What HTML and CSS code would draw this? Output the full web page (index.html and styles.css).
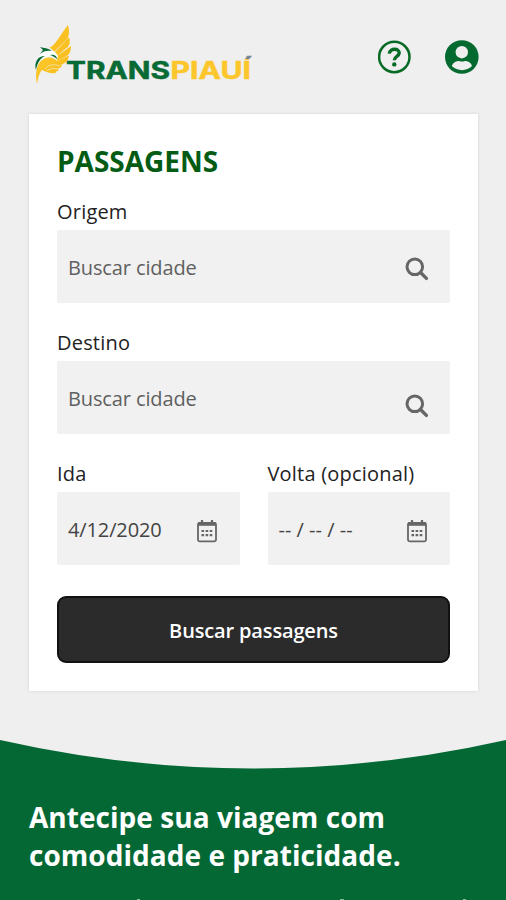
FILE: index.html
```html
<!DOCTYPE html>
<html lang="pt-BR">
<head>
    <meta charset="UTF-8">
    <meta name="viewport" content="width=device-width, initial-scale=1.0">
    <title>Transpiauí - Passagens</title>
    <link rel="stylesheet" href="styles.css">
</head>
<body>
    <header class="header">
        <svg class="logo" width="222" height="66" viewBox="32 22 222 66" role="img" aria-label="Transpiauí">
            <defs>
                <linearGradient id="wing" x1="0" y1="0" x2="1" y2="1">
                    <stop offset="0" stop-color="#fdc92e"/>
                    <stop offset="1" stop-color="#f8b918"/>
                </linearGradient>
                <linearGradient id="accent" gradientUnits="userSpaceOnUse" x1="0" y1="50" x2="0" y2="90">
                    <stop offset="0.235" stop-color="#758592"/>
                    <stop offset="0.235" stop-color="#fcc62c"/>
                </linearGradient>
            </defs>
            <!-- upper wing, one blade per feather -->
            <path fill="url(#wing)" d="M49 48C55 46 60 35 68 25C70 32 69 38 65 41L57 49L54 52C53 50 51 48 49 48Z"/>
            <path fill="url(#wing)" d="M55 52L69 37C71 43 69 47 65 49L57 56Z"/>
            <path fill="url(#wing)" d="M57 56L71 46C71 52 69 55 65 57L57 61Z"/>
            <path fill="url(#wing)" d="M57 61L69 55.5C68 61 65 64 60 65L56 63Z"/>
            <!-- lower wing and tail -->
            <path fill="url(#wing)" d="M37 84C35 74 36 65 42 60C47 56 54 57 58 62L62 66C60 69 57 68 59 70C57 72 55 71 56 73C51 74 46 72 42 70C39 73 38 78 37 84Z"/>
            <path fill="none" stroke="#f3e6bd" stroke-width="0.8" d="M45 69C49 64 54 64 60 66M47 70.5Q52 67 59 69"/>
            <!-- head -->
            <path fill="#fff" d="M37 62C38 55 44 49 52 51C56 52 58 55 58 58C50 54 42 57 37 65Z"/>
            <path fill="#086b35" d="M40 47C44 48 48 48 52 51C47 50 43 51 40 54L43 50ZM37 60C39 57 41 56 45 56C40 58 37 64 36 70C35 67 35 63 37 60ZM50 55C54 54 57 56 57 59C55 57 53 56 50 55Z"/>
            <text class="logo-text" x="66" y="79" textLength="104" lengthAdjust="spacingAndGlyphs" fill="#086b35" stroke="#086b35">TRANS</text>
            <text class="logo-text" x="170.5" y="79" textLength="80.5" lengthAdjust="spacingAndGlyphs" fill="url(#accent)" stroke="url(#accent)">PIAUÍ</text>
        </svg>
        <nav class="actions">
            <svg class="action-icon" viewBox="0 0 34 34">
                <circle cx="16.3" cy="17" r="15.2" fill="none" stroke="#086b25" stroke-width="2.5"/>
                <path d="M11.2 13.6C12 7.6 21.6 8 21.2 13.2C21 16.5 16.3 16.3 16.3 20.2" fill="none" stroke="#086b25" stroke-width="3.4"/>
                <circle cx="16.3" cy="24.4" r="2.2" fill="#086b25"/>
            </svg>
            <svg class="action-icon" viewBox="0 0 34 34">
                <circle cx="16.8" cy="17" r="16.8" fill="#046a30"/>
                <circle cx="16.8" cy="12.2" r="6.2" fill="#efefef"/>
                <path d="M6.8 26C8 22 12 21 14 21Q17 22 20 21C22 21 26 22 27 26C22 31.5 12 31.5 6.8 26Z" fill="#efefef"/>
            </svg>
        </nav>
    </header>

    <main class="card">
        <h1 class="card-title">PASSAGENS</h1>

        <div class="field">
            <label class="label">Origem</label>
            <div class="box">
                <span class="value search">Buscar cidade</span>
                <svg class="search-icon" viewBox="0 0 24 24">
                    <circle cx="9.8" cy="9.8" r="7.8" fill="none" stroke="#666" stroke-width="3"/>
                    <path d="M15.5 15.5L21.4 21.4" stroke="#666" stroke-width="3.4" stroke-linecap="round"/>
                </svg>
            </div>
        </div>

        <div class="field">
            <label class="label">Destino</label>
            <div class="box box-low">
                <span class="value search">Buscar cidade</span>
                <svg class="search-icon" viewBox="0 0 24 24">
                    <circle cx="9.8" cy="9.8" r="7.8" fill="none" stroke="#666" stroke-width="3"/>
                    <path d="M15.5 15.5L21.4 21.4" stroke="#666" stroke-width="3.4" stroke-linecap="round"/>
                </svg>
            </div>
        </div>

        <div class="dates">
            <div class="field">
                <label class="label">Ida</label>
                <div class="box">
                    <span class="value">4/12/2020</span>
                    <svg class="calendar-icon" viewBox="0 0 22 24">
                        <path d="M6 1V5M16 1V5" stroke="#666" stroke-width="2.2"/>
                        <rect x="2" y="4" width="18" height="18.3" rx="1.5" fill="none" stroke="#666" stroke-width="1.8"/>
                        <path d="M2 5H20" stroke="#666" stroke-width="3.6"/>
                        <path d="M5.5 12H16.5M5.5 16.2H16.5" stroke="#666" stroke-width="2.2" stroke-dasharray="2.6 1.5"/>
                    </svg>
                </div>
            </div>
            <div class="field">
                <label class="label">Volta (opcional)</label>
                <div class="box">
                    <span class="value empty">-- / -- / --</span>
                    <svg class="calendar-icon" viewBox="0 0 22 24">
                        <path d="M6 1V5M16 1V5" stroke="#666" stroke-width="2.2"/>
                        <rect x="2" y="4" width="18" height="18.3" rx="1.5" fill="none" stroke="#666" stroke-width="1.8"/>
                        <path d="M2 5H20" stroke="#666" stroke-width="3.6"/>
                        <path d="M5.5 12H16.5M5.5 16.2H16.5" stroke="#666" stroke-width="2.2" stroke-dasharray="2.6 1.5"/>
                    </svg>
                </div>
            </div>
        </div>

        <button class="submit">Buscar passagens</button>
    </main>

    <section class="promo">
        <svg class="curve" viewBox="0 0 506 30" preserveAspectRatio="none">
            <path d="M0 0Q253 57 506 0Z" fill="#efefef"/>
        </svg>
        <h2 class="promo-title">Antecipe sua viagem com<br>comodidade e praticidade.</h2>
        <!-- tops of the next line, cut by the fold -->
        <svg class="next-line" viewBox="0 0 506 2">
            <path d="M137 1.5H140M340 1.5H344M463 1.5H466" stroke="#8bb79d" stroke-width="1"/>
        </svg>
    </section>
</body>
</html>
```

FILE: styles.css
```css
* {
    box-sizing: border-box;
    margin: 0;
    padding: 0;
}

body {
    height: 900px;
    overflow: hidden;
    background: #efefef;
    font-family: 'Open Sans', 'Noto Sans', sans-serif;
    color: #222;
}

.header {
    display: flex;
    justify-content: space-between;
    height: 114px;
    padding: 22px 27px 0 32px;
}

.logo-text {
    font-family: Inter, sans-serif;
    font-size: 24px;
    font-weight: 700;
    stroke-width: 0.5px;
}

.actions {
    display: flex;
    gap: 33px;
    padding-top: 18px;
}

.action-icon {
    width: 34px;
    height: 34px;
}

.card {
    height: 577px;
    margin: 0 28px 0 29px;
    padding: 26px 28px 0;
    background: #fff;
    box-shadow: 0 0 3px rgba(0, 0, 0, 0.12);
}

.card-title {
    height: 57px;
    line-height: 43px;
    font-size: 28px;
    font-weight: 700;
    color: #045c14;
}

.field {
    height: 131px;
}

.label {
    display: block;
    height: 33px;
    line-height: 30px;
    font-size: 20px;
    font-weight: 500;
    letter-spacing: 0.2px;
}

.box {
    display: flex;
    align-items: center;
    justify-content: space-between;
    height: 73px;
    padding: 4px 21px 0 11px;
    border-radius: 2px;
    background: #f1f1f1;
}

.value {
    padding-bottom: 3px;
    font-size: 20px;
    letter-spacing: -0.12px;
    color: #444;
}

.search {
    color: #606060;
}

.empty {
    letter-spacing: 0;
}

.search-icon {
    width: 24px;
    height: 24px;
}

.box-low .search-icon {
    margin-top: 12px;
}

.calendar-icon {
    width: 22px;
    height: 24px;
    margin-right: 1px;
}

.dates {
    display: grid;
    grid-template-columns: 1fr 1fr;
    gap: 28px;
}

.submit {
    display: block;
    width: 100%;
    height: 67px;
    margin-top: 6px;
    padding-top: 2px;
    border: 2px solid #111;
    border-radius: 9px;
    background: #2b2b2b;
    color: #fff;
    font-family: inherit;
    font-size: 20px;
    font-weight: 600;
    letter-spacing: -0.15px;
}

.promo {
    height: 160px;
    margin-top: 49px;
    background: #046835;
}

.curve {
    display: block;
    width: 100%;
    height: 30px;
}

.promo-title {
    height: 128px;
    padding: 28px 28px 0 29px;
    line-height: 38px;
    font-size: 28px;
    font-weight: 700;
    letter-spacing: 0.04px;
    color: #fff;
}

.next-line {
    display: block;
    width: 100%;
    height: 2px;
}
```
